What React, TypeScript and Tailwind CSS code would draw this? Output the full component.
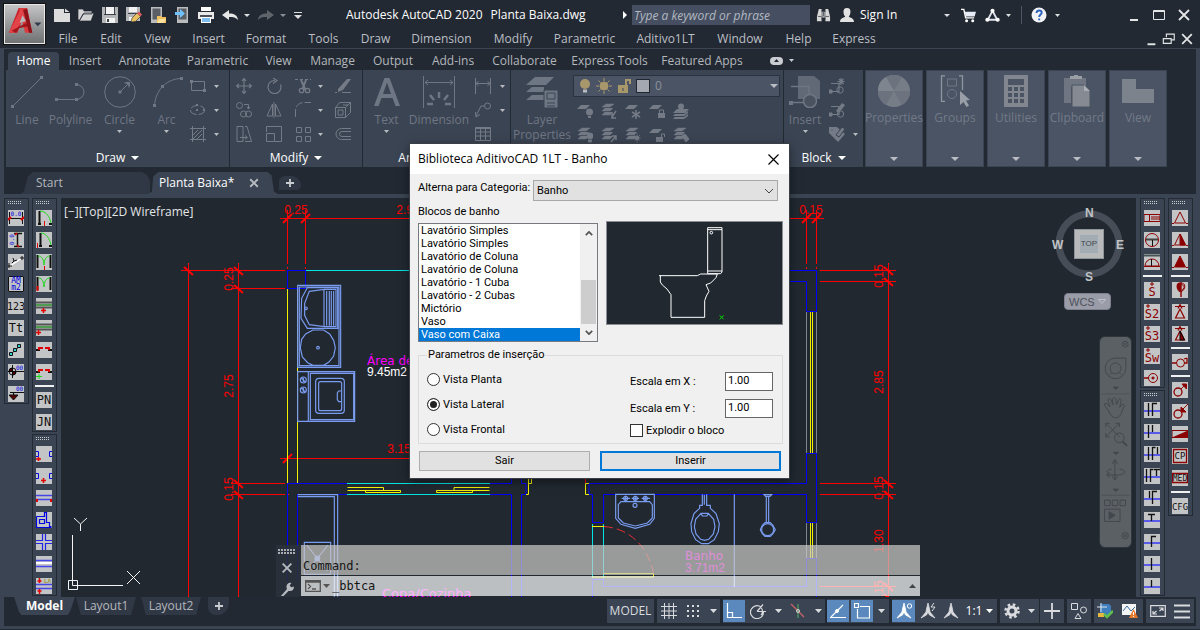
import type { ReactNode } from "react";

/* ---------- shared drawing helpers ---------- */

function Ic({ b = "0 0 16 16", c = "size-4", children }: { b?: string; c?: string; children: ReactNode }) {
  return (
    <svg viewBox={b} className={`${c} shrink-0`} fill="none" stroke="currentColor" aria-hidden="true">
      {children}
    </svg>
  );
}

function Caret({ c = "h-[3px] w-[6px]" }: { c?: string }) {
  return (
    <svg viewBox="0 0 8 4" preserveAspectRatio="none" className={`${c} shrink-0`} aria-hidden="true">
      <path d="M0 0h8l-4 4z" fill="currentColor" />
    </svg>
  );
}

/* ---------- title bar ---------- */

const quickTools: { name: string; art: ReactNode }[] = [
  { name: "New", art: <path d="M0 2h10v4h6v9H0zM11 1.500l4.500 3.500H11z" fill="#dcdcdc" stroke="none" /> },
  { name: "Open", art: <path d="M0 2h5l1 2h8v3H5l-3 6H0zM6 6h10l-3 8H1z" fill="#d4d4d4" stroke="#222933" strokeWidth=".7" /> },
  {
    name: "Save",
    art: (
      <g stroke="none">
        <path d="M0 0h16v16H0z" fill="#b4b6b8" />
        <path d="M3 0h10v7H3zM4 11h9v5H4z" fill="#f2f2f2" />
        <path d="M2 7h12v1H2zM5 12h2v3H5zM3 0h1v7H3zM12 0h1v7h-1z" fill="#3c4148" />
      </g>
    ),
  },
  {
    name: "Save As",
    art: (
      <g stroke="none">
        <path d="M0 0h14v14H0z" fill="#b4b6b8" />
        <path d="M3 0h8v5H3zM3 10h6v4H3z" fill="#f2f2f2" />
        <path d="M2 6h10v1H2z" fill="#3c4148" />
        <path d="m5 15 1-4 5-5 3.500 3.500-5 5z" fill="#e9c060" stroke="#222933" strokeWidth=".6" />
        <path d="m11 6 2-1.500 3 3-1.500 2z" fill="#e05a5a" />
      </g>
    ),
  },
  {
    name: "Open from Web",
    art: (
      <g stroke="none">
        <path d="M1 0h11v16H1z" fill="#b9bbbd" />
        <path d="M2.500 1.500h8v11h-8z" fill="#5b5f65" />
        <path d="M7 9h4l1 1h4v6H7z" fill="#f0c060" />
        <path d="M9 12h7l-2 4H7z" fill="#ffe09a" />
      </g>
    ),
  },
  {
    name: "Save to Web",
    art: (
      <g stroke="none">
        <path d="M3 0h11v16H3z" fill="#b9bbbd" />
        <path d="M4.500 1.500h8v11h-8z" fill="#5b5f65" />
        <path d="M1 5h5V2l5 4.500L6 11V8H1z" fill="#6fc1ff" />
      </g>
    ),
  },
  {
    name: "Plot",
    art: (
      <g stroke="none">
        <path d="M3 0h10v4H3z" fill="#fff" />
        <path d="M0 5h16v7H0z" fill="#e8e8e8" />
        <path d="M2 8h12v2H2z" fill="#4b5058" />
        <path d="M3 10h10v6H3z" fill="#fff" />
        <path d="M4 11h8v4H4z" fill="#7dbdf0" />
      </g>
    ),
  },
  { name: "Undo", art: <path d="M0 8 7 3v3.500c5 0 8.500 1.500 9 6.500-2-2.500-4.500-3-9-3V13z" fill="#e6e6e6" stroke="none" /> },
];

const menus: [string, string][] = [
  ["File", "w-[42px]"],
  ["Edit", "w-[44px]"],
  ["View", "w-[49px]"],
  ["Insert", "w-[53px]"],
  ["Format", "w-[62px]"],
  ["Tools", "w-[53px]"],
  ["Draw", "w-[51px]"],
  ["Dimension", "w-[81px]"],
  ["Modify", "w-[62px]"],
  ["Parametric", "w-[81px]"],
  ["Aditivo1LT", "w-[81px]"],
  ["Window", "w-[68px]"],
  ["Help", "w-[49px]"],
  ["Express", "w-[62px]"],
];

function TitleBar() {
  return (
    <header className="flex h-12 shrink-0 bg-[#222933] pl-1">
      <button
        type="button"
        aria-label="Application menu"
        className="mt-1 flex h-[40px] w-[41px] shrink-0 items-start border border-[#e8e8e8] bg-linear-to-b from-[#c4c4c6] to-[#707274] shadow-[0_0_0_1px_#111]"
      >
        <svg viewBox="0 0 120 114" className="h-[38px] w-[39px]" aria-hidden="true">
          <path d="M12 84 42 8h26L38 84z" fill="#c4242b" />
          <path d="M42 8h26L84 84H62z" fill="#d93a3c" />
          <path d="m50 8 12 26-34 50H12z" fill="#e3444a" />
          <path d="m20 78 44-24 8 10-30 6-8 14z" fill="#a3161d" />
          <path d="m54 30-9 24 20-6z" fill="#b9babc" />
          <path d="m68 10 16 74H74L56 14z" fill="#8e1219" />
          <path d="M90 52h22l-11 12z" fill="#333c4a" />
        </svg>
      </button>
      <div className="flex min-w-0 flex-1 flex-col">
        <div className="flex h-[30px] items-center pr-1 pl-[5px] text-[#dcdee0]">
          {quickTools.map((t) => (
            <button key={t.name} type="button" aria-label={t.name} className="flex w-6 shrink-0 justify-center">
              <Ic>{t.art}</Ic>
            </button>
          ))}
          <button type="button" aria-label="Undo list" className="flex w-[10px] shrink-0 justify-center">
            <Caret />
          </button>
          <button type="button" aria-label="Redo" className="ml-[2px] flex w-6 shrink-0 justify-center">
            <Ic>
              <path d="M16 8 9 3v3.500c-5 0-8.500 1.500-9 6.500 2-2.500 4.500-3 9-3V13z" fill="#5f646b" stroke="none" />
            </Ic>
          </button>
          <button type="button" aria-label="Redo list" className="flex w-[10px] shrink-0 justify-center text-[#8b9097]">
            <Caret />
          </button>
          <button type="button" aria-label="Customize" className="flex w-5 shrink-0 flex-col items-center gap-[2px]">
            <span className="h-px w-2 bg-current" />
            <Caret c="h-[4px] w-[8px]" />
          </button>
          <h1 className="ml-[38px] flex w-[271px] shrink-0 gap-2 whitespace-nowrap text-white">
            <span>Autodesk AutoCAD 2020</span>
            <span>Planta Baixa.dwg</span>
          </h1>
          <button type="button" aria-label="Collapse search" className="flex w-[15px] shrink-0 justify-center">
            <Ic b="0 0 4 8" c="h-2 w-1">
              <path d="m0 0 4 4-4 4z" fill="#fff" stroke="none" />
            </Ic>
          </button>
          <input
            aria-label="Search"
            placeholder="Type a keyword or phrase"
            className="h-5 w-[178px] shrink-0 bg-[#454f61] px-[2px] italic placeholder:text-[#b3b8c0]"
          />
          <button type="button" aria-label="Find" className="flex w-[26px] shrink-0 justify-center">
            <Ic c="size-[15px]">
              <path d="M3 1h3v3h4V1h3l2 8v5h-5v-4H6v4H1V9z" fill="#d8d8d8" stroke="none" />
              <path d="M6.500 2v11M9.500 2v11M8 4v5M2 9h4M10 9h4" stroke="#3a3f47" strokeWidth=".8" />
            </Ic>
          </button>
          <button type="button" className="flex w-[118px] shrink-0 items-center pl-1">
            <Ic c="size-[14px]">
              <path d="M8 0c6 0 4 8 2 10 1 1 6 1 6 6H0c0-5 5-5 6-6C4 8 2 0 8 0z" fill="#e2e2e2" stroke="none" />
            </Ic>
            <span className="ml-[6px] flex-1 text-left text-white">Sign In</span>
            <span className="mr-1">
              <Caret />
            </span>
          </button>
          <button type="button" aria-label="App Store" className="flex w-7 shrink-0 justify-center">
            <Ic c="size-[15px]">
              <path d="M0 1.500h3l2 9h9" stroke="#fff" strokeWidth="1.500" />
              <path d="M4 4h12l-1.500 5H5z" fill="#e8ecf6" stroke="none" />
              <circle cx="6" cy="13.500" r="1.600" fill="#fff" stroke="none" />
              <circle cx="12.500" cy="13.500" r="1.600" fill="#fff" stroke="none" />
            </Ic>
          </button>
          <button type="button" aria-label="Connected services" className="flex shrink-0 items-center gap-[6px] pl-[3px]">
            <Ic c="size-[15px]">
              <path d="M8 3 3 12.500h10z" stroke="#dfe3ee" strokeWidth="2" />
              <circle cx="8" cy="3" r="2.200" fill="#fff" stroke="none" />
              <circle cx="2.500" cy="12.500" r="2.200" fill="#fff" stroke="none" />
              <circle cx="13.500" cy="12.500" r="2.200" fill="#fff" stroke="none" />
            </Ic>
            <Caret c="h-[3px] w-[5px]" />
          </button>
          <span className="ml-[10px] h-[18px] w-px shrink-0 bg-[#4b5566]" />
          <button type="button" aria-label="Help" className="ml-[9px] flex shrink-0 items-center gap-2">
            <Ic>
              <circle cx="8" cy="8" r="7.500" fill="#f1f3f6" stroke="none" />
              <path d="M5.500 6c0-3.500 5.200-3.200 5.200-.3C10.700 7.500 8.200 7.600 8.200 10M8.200 11.500v1.800" stroke="#2d62c0" strokeWidth="1.900" />
            </Ic>
            <Caret c="h-[3px] w-[5px]" />
          </button>
          <div className="ml-auto flex text-[#e4e5e6]">
            <button type="button" aria-label="Minimize" className="flex w-[25px] justify-center">
              <Ic>
                <path d="M4 13h8" strokeWidth="2" />
              </Ic>
            </button>
            <button type="button" aria-label="Maximize" className="flex w-[25px] justify-center">
              <Ic>
                <path d="M2.500 3.500h11v9h-11zM2 4.500h12" />
              </Ic>
            </button>
            <button type="button" aria-label="Close" className="flex w-[25px] justify-center">
              <Ic>
                <path d="m3 3 10 10M13 3 3 13" strokeWidth="1.800" />
              </Ic>
            </button>
          </div>
        </div>
        <nav aria-label="Menu bar" className="flex h-[18px] items-center pr-1 pl-[2px] text-[#bcbfc4]">
          {menus.map(([m, w]) => (
            <a key={m} href="#menu" className={`${w} shrink-0 text-center whitespace-nowrap`}>
              {m}
            </a>
          ))}
          <div className="ml-auto flex text-[#e4e5e6]">
            <button type="button" aria-label="Minimize drawing" className="flex w-[18px] justify-center">
              <Ic c="size-[14px]">
                <path d="M4 14h9" strokeWidth="2.200" />
              </Ic>
            </button>
            <button type="button" aria-label="Restore drawing" className="flex w-[18px] justify-center">
              <Ic c="size-[14px]">
                <path d="M5 6V2.500h9V9h-3M1.500 7.500h9V13h-9z" strokeWidth="1.300" />
              </Ic>
            </button>
            <button type="button" aria-label="Close drawing" className="flex w-[18px] justify-center">
              <Ic c="size-[14px]">
                <path d="m2.500 2.500 11 11M13.500 2.500l-11 11" strokeWidth="2" />
              </Ic>
            </button>
          </div>
        </nav>
      </div>
    </header>
  );
}

/* ---------- ribbon ---------- */

const ribbonTabs: [string, string][] = [
  ["Insert", "w-[50px]"],
  ["Annotate", "w-[69px]"],
  ["Parametric", "w-[77px]"],
  ["View", "w-[45px]"],
  ["Manage", "w-[63px]"],
  ["Output", "w-[58px]"],
  ["Add-ins", "w-[62px]"],
  ["Collaborate", "w-[81px]"],
  ["Express Tools", "w-[89px]"],
  ["Featured Apps", "w-[96px]"],
];

function BigTool({ w, label, caret, children }: { w: string; label: string; caret?: boolean; children: ReactNode }) {
  return (
    <button type="button" className={`${w} flex shrink-0 flex-col items-center pt-[6px] text-[#6f7683]`}>
      <Ic b="0 0 32 32" c="size-8">
        {children}
      </Ic>
      <span className="mt-[4px] text-center leading-[15px] whitespace-pre">{label}</span>
      {caret && (
        <span className="mt-[3px] text-[#b9bcc1]">
          <Caret c="h-[3px] w-[5px]" />
        </span>
      )}
    </button>
  );
}

function Small({ label, children }: { label: string; children: ReactNode }) {
  return (
    <button type="button" aria-label={label} className="flex h-6 items-center justify-center text-[#747b86]">
      <Ic>{children}</Ic>
    </button>
  );
}

function SmallCaret({ label }: { label: string }) {
  return (
    <button type="button" aria-label={label} className="flex h-6 items-center justify-center text-[#b9bcc1]">
      <Caret c="h-[3px] w-[5px]" />
    </button>
  );
}

function Panel({ w, title, children }: { w: string; title: string; children: ReactNode }) {
  return (
    <section className={`${w} mr-px flex shrink-0 flex-col bg-[#3b4453]`}>
      <div className="flex h-[78px]">{children}</div>
      <button type="button" className="flex h-[19px] items-center justify-center gap-[6px] text-white">
        {title}
        <Caret c="h-[4px] w-[8px]" />
      </button>
    </section>
  );
}

const sheet = "M4 2h9l-4 4H0z";

function LayerStack() {
  return <path d="M5 1h8L9 4H1zM4 5l-3 3h8l3-3M4 9l-3 3h8l3-3" fill="currentColor" strokeWidth=".5" />;
}

const layerTools: { name: string; art: ReactNode }[] = [
  { name: "Off", art: <g fill="currentColor" stroke="none"><path d={sheet} /><circle cx="12.500" cy="9" r="3.500" /><path d="M11 13h3v2h-3z" /></g> },
  { name: "Isolate", art: <g><LayerStack /><path d="m15 8-4 6M11 10v5h4" strokeWidth="1.500" /></g> },
  { name: "Freeze", art: <g><path d={sheet} fill="currentColor" stroke="none" /><path d="M11 7v9M7 9l8 5M7 14l8-5" strokeWidth="1.500" /></g> },
  { name: "Lock", art: <g><path d={sheet} fill="currentColor" stroke="none" /><path d="M9 10h7v5H9z" fill="currentColor" stroke="none" /><path d="M10.500 10V7h4v3" /></g> },
  { name: "Make Current", art: <g fill="currentColor" stroke="none"><circle cx="8" cy="3.500" r="3" /><path d="M4 6h12l-4 4H0zM2 11h9l4-3v2l-4 3H0zM2 14h9l4-3v2l-4 3H0z" /></g> },
  { name: "Turn All On", art: <g><LayerStack /><circle cx="13" cy="9" r="3" fill="currentColor" /><path d="M11.500 13h3v2h-3z" fill="currentColor" /></g> },
  { name: "Unisolate", art: <g><LayerStack /><path d="m10 15 5-6M11 9h4v4" strokeWidth="1.500" /></g> },
  { name: "Thaw All", art: <g><LayerStack /><circle cx="12" cy="11" r="2" fill="currentColor" /><path d="M12 6.500v9M7.500 11h9M9 8l6 6M15 8l-6 6" strokeDasharray="1 1" /></g> },
  { name: "Unlock", art: <g><path d={sheet} fill="currentColor" stroke="none" /><path d="M7 10h7v5H7z" fill="currentColor" stroke="none" /><path d="M12.500 10V7h3v3" /></g> },
  { name: "Match Layer", art: <g><LayerStack /><path d="m9 9 3-2 4 5-3 3z" fill="currentColor" /></g> },
];

const foldedPanels: { name: string; art: ReactNode }[] = [
  {
    name: "Properties",
    art: (
      <g stroke="none">
        <circle cx="16" cy="16" r="16" fill="#767d87" />
        <path d="M16 16 8 2a16 16 0 0 1 16 0zM16 16h16a16 16 0 0 1-8 14zM16 16 8 30A16 16 0 0 1 0 16z" fill="#6c737e" />
        <path d="M16 16 8 2a16 16 0 0 0-8 14z" fill="#7f858e" />
      </g>
    ),
  },
  {
    name: "Groups",
    art: (
      <g stroke="#90969f">
        <path d="M6 .800H2.500v25.500H6M20 .800h3.500V15" strokeWidth="1.300" />
        <path d="M8.500 4h9v7h-9z" stroke="#6f7783" />
        <circle cx="13" cy="19" r="4.500" stroke="#6f7783" />
        <path d="M21 16v14l3.500-3 3 5 2.500-1.500-3-5 4-.500z" fill="#9a9fa7" stroke="none" />
      </g>
    ),
  },
  {
    name: "Utilities",
    art: (
      <g stroke="none">
        <path d="M4 0h24v32H4z" fill="#81868f" />
        <path d="M8 4h16v6H8zM8 12h4v4H8zm6 0h4v4h-4zm6 0h4v4h-4zM8 18h4v4H8zm6 0h4v4h-4zm6 0h4v4h-4zM8 24h4v4H8zm6 0h4v4h-4zm6 0h4v4h-4z" fill="#4a5463" />
      </g>
    ),
  },
  {
    name: "Clipboard",
    art: (
      <g stroke="none">
        <path d="M3 3h22v9H3zM3 3h7v25H3z" fill="#6f7681" />
        <path d="M9 1h4V0h4v1h4v3H9z" fill="#9a9fa6" />
        <path d="M11 10h12l6 6v16H11z" fill="#858a93" stroke="#4a5463" />
        <path d="M23 10v6h6z" fill="#a9adb4" />
      </g>
    ),
  },
  { name: "View", art: <path d="M0 4h14v10h18v14H0z" fill="#7d838d" stroke="none" /> },
];

function Ribbon() {
  return (
    <div className="bg-[#222933]">
      <nav aria-label="Ribbon tabs" className="flex h-[21px] items-end pl-1 text-[#b4b7bc]">
        <a href="#home" className="flex h-[18px] w-[51px] shrink-0 items-center justify-center rounded-t-sm bg-[#3b4453] pb-px text-white">
          Home
        </a>
        <div className="flex h-[18px] items-center pb-px pl-px">
          {ribbonTabs.map(([t, w]) => (
            <a key={t} href="#tab" className={`${w} shrink-0 text-center whitespace-nowrap`}>
              {t}
            </a>
          ))}
          <button type="button" aria-label="Minimize ribbon" className="ml-[20px] flex items-center gap-[6px] text-[#c9ccd0]">
            <span className="flex h-2 w-[13px] items-center justify-center rounded-sm bg-current">
              <span className="rotate-180 text-[#222933]">
                <Caret c="h-[3px] w-[5px]" />
              </span>
            </span>
            <Caret c="h-[3px] w-[5px]" />
          </button>
        </div>
      </nav>
      <div className="flex pl-[2px]">
        <Panel w="w-[223px]" title="Draw">
          <BigTool w="w-[42px]" label="Line">
            <path d="m2 30 28-28" />
            <path d="M0 29h3v3H0zM29 0h3v3h-3z" fill="currentColor" stroke="none" />
          </BigTool>
          <BigTool w="w-[45px]" label="Polyline">
            <path d="M1 23.500h21M21 8.500a8 7.500 0 0 1 0 15" />
            <path d="M0 22h3v3H0zM20 22h3v3h-3zM20 7h3v3h-3z" fill="currentColor" stroke="none" />
          </BigTool>
          <BigTool w="w-[53px]" label="Circle" caret>
            <circle cx="16" cy="16" r="15.300" />
            <path d="m16 16 8-8M20.500 7H25v4.500" />
            <path d="M14.500 14.500h3v3h-3zM21 6h5v5z" fill="currentColor" stroke="none" />
          </BigTool>
          <BigTool w="w-[41px]" label="Arc" caret>
            <path d="M3.500 30C4 16 14 3 30 2.500" />
            <path d="M2 28h3v3H2zM10 9h3v3h-3zM29 1h3v3h-3z" fill="currentColor" stroke="none" />
          </BigTool>
          <div className="mt-1 grid h-[72px] grid-cols-[22px_14px] content-start">
            <Small label="Rectangle">
              <path d="M1.500 3.500h13v9h-13z" />
              <path d="M0 2h3v3H0zM13 11h3v3h-3z" fill="currentColor" stroke="none" />
            </Small>
            <SmallCaret label="Rectangle options" />
            <Small label="Ellipse">
              <ellipse cx="7.500" cy="8" rx="7" ry="4.500" strokeDasharray="8 2" />
              <path d="M6 7h2v2H6zM13 7h2v2h-2zM6 2h2v2H6z" fill="currentColor" stroke="none" />
            </Small>
            <SmallCaret label="Ellipse options" />
            <Small label="Hatch">
              <path d="M2.500 0v16M13.500 0v16M0 2.500h16M0 13.500h16M3 9l5-5M3 13l9-9M7 13l5-5" />
            </Small>
            <SmallCaret label="Hatch options" />
          </div>
        </Panel>
        <Panel w="w-[132px]" title="Modify">
          <div className="mt-1 grid h-[72px] grid-cols-[28px_32px_26px_8px_38px] content-start">
            <Small label="Move">
              <path d="M8 1v14M1 8h14M6 3l2-2.500L10 3M6 13l2 2.500 2-2.500M3 6 .500 8 3 10M13 6l2.500 2-2.500 2" strokeWidth="1.200" />
            </Small>
            <Small label="Rotate">
              <path d="M9 2.500a6.500 6.500 0 1 0 5.500 4M7 0l4 2.500L7 5.500" strokeWidth="1.200" />
            </Small>
            <Small label="Trim">
              <path d="M0 1.500h16" strokeDasharray="3 2" />
              <path d="m6 2 4.500 10M11 2 7.500 11" strokeWidth="2" />
              <circle cx="6.500" cy="12.500" r="2.200" strokeWidth="1.300" />
              <circle cx="12.500" cy="12.500" r="2.200" strokeWidth="1.300" />
            </Small>
            <SmallCaret label="Trim options" />
            <Small label="Erase">
              <path d="M0 14.500h2M7 14.500h9" />
              <path d="m3 11 9-10h4L8 12l-5 2z" fill="currentColor" stroke="none" />
            </Small>
            <Small label="Copy">
              <circle cx="3.500" cy="3.500" r="3" />
              <circle cx="7.500" cy="12" r="3" />
              <circle cx="12.500" cy="12" r="3" />
              <path d="M8 2.500h4.500V7M11 5l1.500 2L14 5" />
            </Small>
            <Small label="Mirror">
              <path d="M6.500 2v12H1zM9.500 2v12H15zM8 0v16" />
            </Small>
            <Small label="Fillet">
              <path d="M.500 15V9C.500 4 4 .500 9 .500h7" strokeDasharray="8 2" />
            </Small>
            <SmallCaret label="Fillet options" />
            <Small label="Explode">
              <path d="M.500 5.500h10v10H.500zM3 8h5v5H3zM.500 5.500l4-5h11l-5 5M15.500.500v10l-5 5M8 3h5" />
            </Small>
            <Small label="Stretch">
              <path d="M1 .500h6v15H1zM9 .500h2l4.500 15H9M4 11.500h7M9 9.500l2.500 2L9 13.500" />
            </Small>
            <Small label="Scale">
              <path d="M.500 6V.500h15v15H9M.500 7.500h8v8h-8z" />
            </Small>
            <Small label="Array">
              <path d="M1.500 1.500h5v5h-5zM10.500 1.500h5v5h-5zM1.500 10.500h5v5h-5zM10.500 10.500h5v5h-5z" />
            </Small>
            <SmallCaret label="Array options" />
            <Small label="Offset">
              <path d="M16 2.500H6.500a5.500 5.500 0 0 0 0 11H16M16 5.500H7a2.500 2.500 0 0 0 0 5h9" />
            </Small>
          </div>
        </Panel>
        <Panel w="w-[147px]" title="Annotation">
          <BigTool w="w-[47px]" label="Text" caret>
            <path d="M3 30 13.500 2h5L29 30h-4.500l-3-8h-11l-3 8zM12 18h8L16 6.500z" fill="currentColor" stroke="none" />
          </BigTool>
          <BigTool w="w-[58px]" label="Dimension">
            <path d="M.500 0v32M31.500 0v32M2 6.500h28M5 4 2 6.500 5 9M27 4l3 2.500L27 9" />
            <path d="M16 16v6M7 19l4 5M25 19l-4 5M4 28h6M22 28h6" strokeWidth="2.500" />
          </BigTool>
          <div className="mt-1 grid h-[72px] grid-cols-[30px_8px] content-start">
            <Small label="Linear">
              <path d="M.500 0v16M15.500 0v16M1 5.500h14M3.500 3 1 5.500 3.500 8M12.500 3 15 5.500 12.500 8" />
            </Small>
            <SmallCaret label="Linear options" />
            <Small label="Leader">
              <circle cx="12.500" cy="4" r="3" />
              <path d="M9.500 4H6L1 14M.500 10l.500 5 4-2.500" />
            </Small>
            <SmallCaret label="Leader options" />
            <Small label="Table">
              <path d="M.500 1.500h15v13H.500zM0 2.500h16M.500 6h15M.500 10h15M5.500 2v12M10.500 2v12" />
            </Small>
          </div>
        </Panel>
        <Panel w="w-[272px]" title="Layers">
          <BigTool w="w-[62px]" label={"Layer\nProperties"}>
            <path d="M9 1h19l-8 8H0zM6 11l-6 5h18v-5M6 19l-6 5h18v-5" fill="currentColor" stroke="none" />
            <path d="M18 14h14v18H18z" fill="currentColor" stroke="#3b4453" />
            <path d="M21 17h8v6h-8zM21 27h8M21 30h8" stroke="#3b4453" />
          </BigTool>
          <div className="flex flex-1 flex-col pt-[5px] pr-[3px]">
            <button
              type="button"
              aria-label="Layer 0"
              className="flex h-[22px] items-center border border-[#2c333f] bg-[#4a5465] pr-px pl-[2px] text-[#8d929b]"
            >
              <span className="flex w-[18px] justify-center">
                <Ic>
                  <circle cx="8" cy="6" r="5" fill="#a9976c" stroke="none" />
                  <path d="M6 11.500h4v3H6z" fill="#b9bcc1" stroke="none" />
                </Ic>
              </span>
              <span className="flex w-[20px] justify-center text-[#a9976c]">
                <Ic>
                  <circle cx="8" cy="8" r="4" fill="currentColor" />
                  <path d="M8 0v3M8 13v3M0 8h3M13 8h3M2.500 2.500l2 2M11.500 11.500l2 2M13.500 2.500l-2 2M4.500 11.500l-2 2" />
                </Ic>
              </span>
              <span className="flex w-[20px] justify-center text-[#a9976c]">
                <Ic>
                  <path d="M2 7h10v8H2z" fill="currentColor" stroke="none" />
                  <path d="M10 7V2h4v4" strokeWidth="2" />
                  <path d="M7 10v3" stroke="#3b4453" />
                </Ic>
              </span>
              <span className="ml-[2px] size-[14px] border border-[#22272f] bg-[#a3a8b1]" />
              <span className="ml-[5px] flex-1 text-left">0</span>
              <span className="text-[#b9bcc1]">
                <Caret c="h-[4px] w-[8px]" />
              </span>
            </button>
            <div className="mt-[2px] grid grid-cols-[repeat(5,24px)]">
              {layerTools.map((t) => (
                <Small key={t.name} label={t.name}>
                  {t.art}
                </Small>
              ))}
            </div>
          </div>
        </Panel>
        <Panel w="w-[79px]" title="Block">
          <BigTool w="w-[42px]" label="Insert" caret>
            <path d="M9 0h16l6 5v18H9z" fill="currentColor" stroke="none" opacity=".75" />
            <path d="M2 10.500h18v16H2" strokeWidth="1.500" />
            <circle cx="21" cy="25" r="6.500" fill="#4a5260" strokeWidth="1.500" />
            <path d="M0 25h4v4H0z" fill="currentColor" stroke="none" />
          </BigTool>
          <div className="mt-1 grid h-[72px] grid-cols-[22px_14px] content-start">
            <Small label="Create block">
              <path d="M2 5.500h8v8H2M12 0v7M8.500 3.500h7M10 1l4.500 5M14.500 1 10 6" strokeWidth="1.200" />
              <circle cx="11" cy="12" r="3.200" />
              <path d="M0 12h3v3H0z" fill="currentColor" />
            </Small>
            <span />
            <Small label="Edit block">
              <path d="M2 4.500h8v8H2" strokeWidth="1.200" />
              <circle cx="11.500" cy="12" r="3.200" />
              <path d="m7 9 6-8 3 2-6 8z" fill="currentColor" stroke="none" />
              <path d="M0 11h3v3H0z" fill="currentColor" />
            </Small>
            <span />
            <Small label="Edit attributes">
              <path d="M0 1h8l8 7-7 8-9-9z" fill="currentColor" stroke="none" />
              <path d="m7 9 6-8 3 2-6 8z" fill="currentColor" stroke="#3b4453" />
              <circle cx="3" cy="4" r="1" fill="#3b4453" />
            </Small>
            <SmallCaret label="Attribute options" />
          </div>
        </Panel>
        <div className="ml-px flex gap-[3px]">
          {foldedPanels.map((p) => (
            <button
              key={p.name}
              type="button"
              className="flex h-[97px] w-[58px] shrink-0 flex-col items-center border border-[#3b4453] bg-[#4a5465] pt-1 text-[#727a87]"
            >
              <Ic b="0 0 32 32" c="size-8">
                {p.art}
              </Ic>
              <span className="mt-[3px] leading-[15px]">{p.name}</span>
              <span className="mt-auto mb-[5px] text-[#b9bcc1]">
                <Caret c="h-[4px] w-[8px]" />
              </span>
            </button>
          ))}
        </div>
      </div>
      <div className="flex h-[27px] items-end pl-4">
        <a
          href="#start"
          className="flex h-[22px] w-[130px] items-center bg-[#303846] pl-4 text-[#b4b7bc] [clip-path:polygon(0_100%,3%_90%,6%_20%,10%_0,94%_0,98%_15%,100%_40%,100%_100%)]"
        >
          Start
        </a>
        <a
          href="#planta"
          className="-ml-[2px] flex h-[22px] w-[130px] items-center bg-[#3b4453] pl-[11px] text-white [clip-path:polygon(0_100%,3%_90%,4%_20%,8%_0,92%_0,95%_15%,97%_90%,100%_100%)]"
        >
          Planta Baixa*
          <span className="ml-[15px] text-[#b9bcc1]">
            <Ic c="size-[10px]">
              <path d="m2 2 12 12M14 2 2 14" strokeWidth="3" />
            </Ic>
          </span>
        </a>
        <button
          type="button"
          aria-label="New drawing"
          className="mb-1 ml-px flex h-[14px] w-[22px] items-center justify-center rounded-tl-lg rounded-tr-xl rounded-br-md bg-[#303846] text-[#c9ccd0]"
        >
          <Ic c="size-[8px]" b="0 0 8 8">
            <path d="M4 0v8M0 4h8" strokeWidth="1.800" />
          </Ic>
        </button>
      </div>
    </div>
  );
}

/* ---------- side toolbars ---------- */

const B = "#0000e0";
const R = "#e00000";
const M = "#8b0000";

function T({ children, s = 9, y = 12, f = "#111" }: { children: string; s?: number; y?: number; f?: string }) {
  return (
    <text x="8" y={y} textAnchor="middle" fontSize={s} fill={f} stroke="none" fontFamily="DejaVu Sans Mono, monospace">
      {children}
    </text>
  );
}

function WallBand({ y = 8 }: { y?: number }) {
  return <path d={`M0 ${y}h16v2H0z`} fill="#5a5ae8" stroke="none" />;
}

const sep = null;
type Tool = { name: string; art: ReactNode } | null;

const dimTools: Tool[] = [
  { name: "Linear dimension", art: <g><path d="M1.500 2v12M14.500 2v12M0 8.500h16" stroke="#111" /><path d="m0 10 3-3M13 10l3-3" stroke={R} strokeWidth="2" /><T s={6} y={6} f={B}>0.0</T></g> },
  { name: "Vertical dimension", art: <g><path d="M6 1.500h8M6 14.500h8M9.500 1v14" stroke="#111" strokeWidth="1.500" /><path d="M7 3 9 1M11 15l-2-2" stroke={R} strokeWidth="1.500" /><text x="0" y="0" transform="translate(6 13) rotate(-90)" fontSize="6" fill={B} stroke="none" fontFamily="DejaVu Sans Mono, monospace">0.0</text></g> },
  { name: "Aligned dimension", art: <g><path d="m2 12 12-8" stroke="#fff" strokeWidth="1.500" /><path d="M1 9v5M0 12h4M14 2v4M12 4h4M5 4l1 3 3-1M4 9l2-2" stroke="#111" /></g> },
  { name: "Area", art: <g><path d="M.500.500h15v15H.500z" stroke="#111" /><T s={8} y={7} f={B}>AM</T><T s={8} y={14} f={B}>m2</T></g> },
  { name: "Numbering", art: <T s={10} y={12}>123</T> },
  { name: "Text", art: <T s={12} y={12}>Tt</T> },
  { name: "Sequence", art: <g stroke="#111"><path d="m3 12 10-9" /><path d="M1.500 10.500h3v3h-3zM5.500 6.500h3v3h-3zM9.500 2.500h3v3h-3z" fill="#2fd6d6" /></g> },
  { name: "Level mark", art: <g><path d="M0 7.500h16M4.500 1v13" stroke="#111" /><circle cx="4.500" cy="7.500" r="3.500" stroke="#111" /><path d="M4.500 4v3.500H1A3.500 3.500 0 0 1 4.500 4zM4.500 11V7.500H8A3.500 3.500 0 0 1 4.500 11z" fill="#500" /><text x="8" y="6" fontSize="6" fill={B} stroke="none" fontFamily="DejaVu Sans Mono, monospace">00</text></g> },
  { name: "Section level", art: <g><path d="M2 6.500h14M5.500 6v4" stroke="#111" strokeWidth="1.200" /><path d="M1 9h9l-4.500 5z" fill="#500" stroke="#111" /><text x="8" y="5" fontSize="6" fill={B} stroke="none" fontFamily="DejaVu Sans Mono, monospace">00</text></g> },
];

const doorTools: Tool[] = [
  { name: "Door centered", art: <g><path d="M3.500 1v13M2 14h3M13 14h3" stroke="#111" strokeWidth="2" /><path d="M4 1c6 0 10 6 11 12" stroke="#19d919" /><path d="M8.500 11v5" stroke={R} /></g> },
  { name: "Door by corner", art: <g><path d="M4.500 1v13M3 14h3M13 14h3" stroke="#111" strokeWidth="2" /><path d="M5 1c5 0 9 6 10 12" stroke="#19d919" /><path d="M1.500 11v5" stroke={R} /></g> },
  { name: "Double door centered", art: <g><path d="M1.500 1v13M14.500 1v13" stroke="#111" strokeWidth="2" /><path d="M2 2c4 0 6 4 6 9 0-5 2-9 6-9" stroke="#19d919" /><path d="M8.500 12v4" stroke={R} /></g> },
  { name: "Double door by corner", art: <g><path d="M1.500 1v13M14.500 1v13" stroke="#111" strokeWidth="2" /><path d="M3 2c3 0 5 4 5 9 0-5 2-9 6-9" stroke="#19d919" /><path d="M1.500 10v5" stroke={R} strokeWidth="2" /></g> },
  { name: "Window centered", art: <g><path d="M0 4.500h16M0 9.500h16" stroke="#555" strokeWidth="2" /><path d="M0 7h16" stroke="#008000" strokeWidth="1.200" /><path d="M7.500 15v-5M5 12.500h5" stroke={R} strokeWidth="1.500" /></g> },
  { name: "Window by corner", art: <g><path d="M0 4.500h16M0 9.500h16" stroke="#555" strokeWidth="2" /><path d="M0 7h16" stroke="#008000" strokeWidth="1.200" /><path d="M2.500 15v-5M0 12.500h5" stroke={R} strokeWidth="1.500" /></g> },
  { name: "Opening centered", art: <g><path d="M0 8h4M12 8h4" stroke="#111" strokeWidth="2" /><path d="M3 8V6h4M13 8V6H9" stroke={R} strokeWidth="2" /></g> },
  { name: "Opening by corner", art: <g><path d="M0 8h4M12 8h4" stroke="#111" strokeWidth="2" /><path d="M3 8V6h4M13 8V6H9" stroke={R} strokeWidth="2" /><path d="M0 12.500h6M3 10v5" stroke="#19d919" /></g> },
  sep,
  { name: "PN", art: <T s={12} y={12}>PN</T> },
  { name: "JN", art: <T s={12} y={12}>JN</T> },
];

const wallEditTools: Tool[] = [
  { name: "Wall opening start", art: <g><path d="M0 5.500h2.500v5H0M16 5.500h-2.500v5H16" stroke={B} /><path d="M2.500 15v-4M0 13h5" stroke={R} strokeWidth="1.500" /></g> },
  { name: "Wall opening center", art: <g><path d="M0 5.500h2.500v5H0M16 5.500h-2.500v5H16" stroke={B} /><path d="M7.500 15v-5M5 12.500h5" stroke={R} strokeWidth="1.500" /></g> },
  { name: "Close wall", art: <g><path d="M0 5.500h16M0 9.500h16" stroke="#4444e8" strokeWidth="1.500" /><path d="M0 10.500h2M14 10.500h2" stroke={R} strokeWidth="3" /></g> },
  { name: "Wall outline", art: <path d="M.500 4.500h8v-4h2v10h3v4h2M.500 4.500v11h15M3.500 7.500h5v4h-5z" stroke={B} strokeWidth="1.200" /> },
  { name: "Wall crossing", art: <path d="M6.500 0v6.500H0M9.500 0v6.500H16M6.500 16V9.500H0M9.500 16V9.500H16" stroke="#2222e4" strokeWidth="1.200" /> },
  { name: "Parallel wall", art: <g><path d="M0 4.500h16M0 10.500h16" stroke="#4444e8" strokeWidth="1.500" /><path d="M0 7h16" stroke="#fff" strokeWidth="2" /></g> },
  { name: "Wall label", art: <g><path d="M0 6.500h16M0 10.500h16" stroke="#4444e8" strokeWidth="1.500" /><path d="M3.500 0v5M1.500 3h4M3.500 16v-5M1.500 13h4" stroke={R} strokeWidth="1.500" /><text x="8" y="5" fontSize="6" fill="#8a8a00" stroke="none" fontFamily="DejaVu Sans Mono, monospace">LA</text></g> },
];

const elecTools: Tool[] = [
  { name: "Fluorescent", art: <path d="M0 4.500h16v7H0zM5.500 4.500v7M7 7h9M7 9h9" stroke={M} /> },
  { name: "Ceiling light", art: <g><circle cx="8" cy="8" r="6.500" stroke={M} /><path d="M2 7.500h12" stroke="#444" strokeWidth="2" /><path d="M8.500 8v6" stroke="#111" /></g> },
  { name: "Wall light", art: <g><path d="M0 1.500h16" stroke="#455" strokeWidth="2" /><path d="M1 12a7 7 0 0 1 14 0zM0 12.500h16" stroke={M} /><path d="M7.500 5v7" stroke="#111" /></g> },
  sep,
  { name: "Switch", art: <g><T s={12} y={14} f={M}>S</T><path d="M8 0v4M6 2h4" stroke={M} /></g> },
  { name: "Double switch", art: <g><T s={12} y={14} f={M}>S2</T><path d="M4 0v4M2 2h4" stroke={M} /></g> },
  { name: "Triple switch", art: <g><T s={12} y={14} f={M}>S3</T><path d="M4 0v4M2 2h4" stroke={M} /></g> },
  { name: "Three-way switch", art: <g><T s={12} y={14} f={M}>Sw</T><path d="M4 0v4M2 2h4" stroke={M} /></g> },
  { name: "Push button", art: <g><circle cx="9" cy="8" r="4.500" stroke={M} /><path d="M0 8h5M7.500 8h3M9 6.500v3" stroke={M} strokeWidth="1.300" /></g> },
];

const wallMarks: [string, string][] = [
  ["T junction A", "M4.500 1v13M8.500 14V1.500H13"],
  ["T junction B", "M4.500 1v13M8.500 1v7"],
  ["T junction C", "M4.500 1v13M8.500 14V1.500h3M13.500 1v7"],
  ["T junction D", "M2.500 1v13M6.500 14V1.500h3M10 1.500h6M12.500 1v7"],
  ["T junction E", "M5.500 1v7M8.500 14V1.500H13"],
  ["T junction F", "M4 2.500h7M7.500 2v7"],
  ["T junction G", "M7.500 13V2.500H12"],
  ["T junction H", "M7.500 2v12"],
  ["T junction I", "M7.500 2v7"],
];

const wallTools: Tool[] = wallMarks.map(([name, d]) => ({
  name,
  art: (
    <g>
      <WallBand />
      <path d={d} stroke="#111" strokeWidth="1.300" />
    </g>
  ),
}));

const outletTools: Tool[] = [
  { name: "Low outlet", art: <path d="m8 2 5.500 11h-11zM0 13.500h2M14 13.500h2" stroke={M} /> },
  { name: "Medium outlet", art: <g><path d="m8 2 5.500 11h-11z" stroke={M} /><path d="m8 2 5.500 11H8z" fill={M} stroke={M} /><path d="M0 13.500h2M14 13.500h2" stroke={M} /></g> },
  { name: "High outlet", art: <path d="m8 2 5.500 11h-11zM0 13.500h2M14 13.500h2" fill={M} stroke={M} /> },
  sep,
  { name: "Floor outlet", art: <g><path d="M9 1.500 12.500 5 9 10 5.500 5z" stroke={M} /><path d="M9 1C4 1 4 7 9 10zM9 9v6" fill={M} stroke={M} strokeWidth="1.400" /><path d="M9 1c5 0 5 6 0 9" stroke={M} /></g> },
  { name: "Phone outlet", art: <path d="m8 5 4.500 9h-9zM3 2.500h10M6 4.500l2-4 2 4" stroke={M} strokeWidth="1.200" /> },
  { name: "Data outlet", art: <g><path d="m8 5 4.500 9h-9zM3 2.500h10M6 4.500l2-4 2 4" stroke={M} strokeWidth="1.200" /><path d="m8 5 4.500 9H8z" fill={M} /></g> },
  sep,
  { name: "Conduit", art: <g><circle cx="8.500" cy="9" r="4" stroke={M} /><path d="M0 9h4.500M12.500 9H15V4M12 5l3-1" stroke={M} strokeWidth="1.300" /></g> },
  sep,
  { name: "Conduit up", art: <g><circle cx="6" cy="10" r="4" stroke={M} strokeWidth="1.300" /><path d="m9 7 5-5M10 2h4.500v5z" fill={M} stroke={M} /></g> },
  { name: "Conduit down", art: <g><circle cx="6" cy="10" r="4" stroke={M} strokeWidth="1.300" /><path d="m16 0-5 5M9 3v5h5z" fill={M} stroke={M} /></g> },
  { name: "Panel board", art: <g><path d="M0 4.500h16v7H0z" stroke={M} /><path d="M16 4.500v7H0z" fill={M} stroke="none" /></g> },
  { name: "CP", art: <g><path d="M1.500 1.500h13v13h-13z" stroke={M} strokeWidth="1.300" /><T s={9} y={11}>CP</T></g> },
  { name: "MED", art: <g><path d="M.500 3.500h15v9H.500z" stroke={M} strokeWidth="1.300" /><T s={8} y={11}>MED</T></g> },
  sep,
  { name: "CFG", art: <T s={9} y={12}>CFG</T> },
];

function Toolbar({ name, tools }: { name: string; tools: Tool[] }) {
  return (
    <div role="toolbar" aria-label={name} className="flex w-[25px] flex-col items-start gap-[6px] border border-[#232a34] pt-[2px] pb-px pl-[3px]">
      <Ic b="0 0 14 3" c="h-[3px] w-[14px]">
        <path d="M0 .500h14M0 2.500h14" stroke="#c8cbd0" strokeDasharray="1 1" />
      </Ic>
      {tools.map((t, i) =>
        t === null ? (
          <span key={i} className="-my-px -ml-px h-[2px] w-[19px] bg-[#eef0f2]" />
        ) : (
          <button key={i} type="button" aria-label={t.name} className="size-4 overflow-hidden bg-[#c3c4c5]">
            <Ic>{t.art}</Ic>
          </button>
        ),
      )}
    </div>
  );
}

/* ---------- floor plan ---------- */

function Dim({ x, y, v, children }: { x: number; y: number; v?: boolean; children: string }) {
  return (
    <text
      transform={v ? `translate(${x} ${y}) rotate(-90)` : `translate(${x} ${y})`}
      textAnchor="middle"
      fontSize="12"
      fill="#ff0000"
      stroke="none"
    >
      {children}
    </text>
  );
}

const hTicks: [number, number][] = [
  [188, 270], [238, 270], [238, 288], [238, 483], [238, 494], [888, 270], [888, 281], [888, 483], [888, 494], [888, 586], [888, 597],
];
const vTicks: [number, number][] = [
  [287, 218], [305, 218], [806, 218], [816, 218], [287, 458],
];

function FloorPlan() {
  return (
    <svg
      viewBox="61 198 1075 399"
      width="1075"
      height="399"
      className="absolute top-0 left-0 font-[Liberation_Sans,sans-serif]"
      fill="none"
      role="img"
      aria-label="Planta Baixa"
    >
      <g stroke="#ff0000">
        <path d="M280 218.500H824M287.500 210v54M287.500 267v2M305.500 210v54M305.500 267v2M806.500 210v54M806.500 267v2M816.500 210v54M816.500 267v2" />
        <path d="M181 270.500h104M188.500 263v334M238.500 263v334M231 288.500h54M231 483.500h54M287 483.500h2M231 494.500h54M287 494.500h2M280 458.500h240M287.500 451v12" />
        <path d="M820 270.500h76M820 281.500h76M820 483.500h76M820 494.500h76M820 586.500h76M888.500 263v334" />
        <path d={hTicks.map(([x, y]) => `M${x - 4} ${y - 3}l9 8`).join("")} strokeWidth="2" />
        <path d={vTicks.map(([x, y]) => `M${x - 4} ${y + 5}l9 -9`).join("")} strokeWidth="2" />
        <path d="M604 526.500c26 2 44 20 49.500 47" strokeDasharray="9 4" stroke="#e03030" />
        <path d="M585.500 470v13" />
      </g>
      <Dim x={296} y={214}>0.25</Dim>
      <Dim x={408} y={214}>2.90</Dim>
      <Dim x={811} y={214}>0.15</Dim>
      <Dim x={399} y={453}>3.15</Dim>
      <Dim x={233} y={279} v>0.25</Dim>
      <Dim x={233} y={386} v>2.75</Dim>
      <Dim x={233} y={489} v>0.15</Dim>
      <Dim x={883} y={276} v>0.15</Dim>
      <Dim x={883} y={382} v>2.85</Dim>
      <Dim x={883} y={488} v>0.15</Dim>
      <Dim x={883} y={541} v>1.30</Dim>
      <Dim x={883} y={592} v>0.15</Dim>

      <g stroke="#0000ff">
        <path d="M287.500 270.500h18v18h-18zM347 483.500H287.500V582M347 494.500H297.500V582" />
        <path d="M490 483.500h21.500v-20M490 494.500h21.500V597M521.500 463v20.500h4.500v11h-4.500V597" />
        <path d="M589 483.500h217.500V453.500h10v69h-10v-28H603.500v28h-11v-28H589z" />
        <path d="M592.500 597v-17.500h11v7h203v-28h10V597" />
        <path d="M780 270.500h36.500v41h-10v-30H780" />
      </g>
      <g stroke="#00e4e4">
        <path d="M306 270.500h480M347 483.500h143M347 494.500h143M592.500 524v54M603.500 524v54" />
      </g>
      <g stroke="#f0f000">
        <path d="M287.500 289v194M297.500 289v194M347.500 487.500h36v3h-36M365.500 490.500h35v2h-35zM489.500 487.500h-35.500v3h35.500M436.500 490.500h36v2h-36z" />
        <path d="M526 494.500h2.500V470M531.500 470v13.500h-3M589 483.500h-3.500v11h3.500M592 526.500h12M603.500 573.500h50v3.500H592" />
        <path d="M810.500 312v141M812.500 312v141M810.500 523v35M812.500 523v35" />
      </g>
      <path d="M806.500 312v141M816.500 312v141M806.500 523v35M816.500 523v35" stroke="#80858c" />

      <g stroke="#7a9cf0" strokeWidth="3.500">
        <g transform="translate(170 195) scale(.3333)">
          <path d="M383 271h129v246H383zM388 276h119v236H388zM412 278l-17 32-2 60 19 30h91V278zM418 289l-14 36v36l14 28 44 6V283zM462 283h36v112h-36M470 288v104M478 288v104M484 288v104M491 288v104" />
          <path d="m429 405-22 12-12 16-4 25 6 28 16 17 16 8h32l16-10 14-18 5-25-5-22-12-19-18-12z" />
          <circle cx="408" cy="340" r="4" />
          <circle cx="444" cy="458" r="4" />
          <path d="M383 530h171v149H383zM415 530v149M421 535h130v139H421z" />
          <rect x="437" y="550" width="86" height="105" rx="10" />
          <rect x="446" y="560" width="69" height="87" rx="6" />
          <path d="M514 588h-8l-4 6v20l4 6h8" />
          <circle cx="400" cy="555" r="9" />
          <circle cx="400" cy="585" r="9" />
          <path d="m394 549 12 12M394 579l12 12M400 548v14M400 578v14" />
        </g>
        <g transform="translate(260 470) scale(.3333)">
          <path d="M113 74h120v306M113 80h110v300M133 217h79v96h-79zM140 225l62 78M204 225l-62 78" />
          <circle cx="172" cy="265" r="7" fill="#7a9cf0" />
        </g>
        <g transform="translate(580 470) scale(.3333)">
          <path d="M107 73h116v72l-14 18-43 12-43-12-16-18zM115 104l8-9h86l8 9v40l-15 15-36 9-36-9-15-15zM125 85h25M155 85h22M185 85h25M137 77v16M166 77v16M196 77v16" />
          <circle cx="137" cy="85" r="6" />
          <circle cx="166" cy="85" r="6" />
          <circle cx="196" cy="85" r="6" />
          <circle cx="165" cy="106" r="6" />
          <path d="M367 73v33h-8v9l-17 16-9 30 2 24 12 24 18 12h20l18-12 12-24 3-24-10-30-17-16v-9h-11V73M373 74v30" />
          <path d="m363 130-16 18-4 22 5 22 14 16 12 3 12-3 14-16 5-22-4-22-16-18zM363 130l4 8h14l4-8" />
          <path d="M463 73v278M552 74h23l-5 5h-13zM559 79v78M566 79v78" />
          <circle cx="563" cy="179" r="18" />
          <path d="M555 158h16l8 8 7 13-7 12-8 8h-16l-8-8-6-12 6-13z" />
        </g>
      </g>

      <g fill="#ff00ff" fontSize="12" fontFamily="DejaVu Sans, sans-serif">
        <text x="367" y="365">Área de Serviço</text>
        <text x="685" y="560">Banho</text>
        <text x="382" y="598" fontSize="13">Copa/Cozinha</text>
      </g>
      <text x="685" y="572" fontSize="12" fill="#ff00ff">3.71m2</text>
      <text x="367" y="376" fontSize="12" fill="#ffffff">9.45m2</text>

      <g stroke="#f4f4f4">
        <path d="M72.500 535v50.500H123M68.500 580.500h9v9h-9zM74 518l6.500 6v7M87 518l-6.500 6M127 571l13 13M140 571l-13 13" />
      </g>
    </svg>
  );
}

function NavArt() {
  return (
    <Ic b="0 0 96 636" c="h-[210px] w-[31px]">
      <g strokeWidth="3">
        <circle cx="78" cy="15" r="9" />
        <path d="m74 11 8 8M82 11l-8 8" />
        <path d="M49 58h31v32a32 32 0 1 1-31-32z" />
        <circle cx="48" cy="90" r="17" />
        <path d="M30 110l6-7M66 110l-6-7" />
        <path d="M41 148h16l-8 7z" fill="currentColor" />
        <path d="M4 169h88" opacity=".5" />
        <path d="M27 222 14 204c-3-6 4-8 8-4l9 9-6-20c-1-7 6-8 9-2l6 16-1-17c1-7 9-7 10 0l2 16 6-14c3-6 10-4 8 3l-4 20 7-8c5-4 9 0 7 4l-11 26c-6 14-28 16-37-11z" />
        <path d="m18 260 42 42M60 260l-42 42M18 272v-12h12M48 260h12v12M18 290v12h12" />
        <circle cx="60" cy="305" r="15" />
        <path d="m70 317 14 13" strokeWidth="6" />
        <path d="M41 350h16l-8 7zM41 464h16l-8 7z" fill="currentColor" />
        <path d="M46 374v60M38 386l8-14 8 14M38 424l8 12 8-12M60 402c22 2 22 14 0 18H24M30 412l-10 8 10 8M36 402c-18 3-18 10-6 15" />
        <path d="M4 483h88" opacity=".5" />
        <path d="M14 498h17v17H14zM38 498h17v17H38zM62 498h17v17H62zM14 526h48v38H14z" />
        <path d="m28 534 19 11-19 12z" fill="currentColor" />
        <circle cx="78" cy="608" r="10" />
        <path d="M72 606h12M72 610h12" />
      </g>
    </Ic>
  );
}

function Canvas() {
  return (
    <main className="relative min-w-0 flex-1 overflow-hidden bg-[#212830]">
      <FloorPlan />
      <p className="absolute top-[6px] left-[3px] whitespace-nowrap text-[#e4e6e8]">[−][Top][2D Wireframe]</p>

      <div className="absolute top-[7px] right-[7px] size-20 font-[Liberation_Sans,sans-serif] text-[12px] leading-3 font-bold text-[#c0c3c6]">
        <svg viewBox="0 0 80 80" className="absolute inset-0 size-20" aria-hidden="true">
          <circle cx="40" cy="39" r="30" fill="none" stroke="#474d56" strokeWidth="7" />
        </svg>
        <span className="absolute top-[2px] left-[36px]">N</span>
        <span className="absolute bottom-[2px] left-[36px]">S</span>
        <span className="absolute top-[34px] left-[3px]">W</span>
        <span className="absolute top-[34px] right-[5px]">E</span>
        <button
          type="button"
          className="absolute top-[24px] left-[25px] flex size-[30px] items-center justify-center border border-[#8f9499] bg-[#b7b9bb] text-[8px] text-[#3f464e]"
        >
          <span className="flex size-[18px] items-center justify-center bg-[#a3acb3] leading-none font-normal">TOP</span>
        </button>
      </div>
      <button
        type="button"
        className="absolute top-[95px] right-[25px] flex h-[17px] w-[47px] items-center justify-between rounded-sm border border-[#7f828e] bg-[#9a9ca8] px-1 font-[Liberation_Sans,sans-serif] text-[11px] text-[#4e525c]"
      >
        WCS
        <Ic b="0 0 8 6" c="h-[6px] w-2">
          <path d="M.500.500h7l-3.500 4z" stroke="#c0c2cc" />
        </Ic>
      </button>
      <div className="absolute top-[138px] right-[4px] rounded-md border border-[#2f353d] bg-[#5b6064] text-[#42474e]">
        <NavArt />
      </div>

      <div className="absolute top-[347px] left-[215px] flex h-[52px] w-[644px]">
        <div className="flex w-[25px] flex-col items-center gap-[9px] bg-[#2a313c]/90 pt-1 pr-1 text-[#b7babf]">
          <Ic b="0 0 17 5" c="h-[5px] w-[17px]">
            <path d="M0 1h17M0 4h17" stroke="#a9adb3" strokeWidth="2" strokeDasharray="2 1" />
          </Ic>
          <Ic c="size-[10px]">
            <path d="m1 1 14 14M15 1 1 15" strokeWidth="3" />
          </Ic>
          <Ic c="size-[14px]">
            <path d="M1 16 8 8C6 4 9 0 13 1l-2 3 2 2 3-1c0 4-3 6-6 5l-7 7z" fill="currentColor" stroke="none" />
          </Ic>
        </div>
        <div className="flex min-w-0 flex-1 flex-col gap-px font-[DejaVu_Sans_Mono,monospace] text-[12px] text-[#141414]">
          <p className="flex h-[30px] items-end bg-[#cdcbc8]/70 px-[2px] leading-[18px]">Command:</p>
          <label className="flex h-5 items-center bg-white/70 px-1">
            <Ic b="0 0 16 12" c="h-3 w-4">
              <path d="M.700.700h14.600v10.600H.700zM1 2h14M3 4l2.500 2.500L3 9M7 9h4" stroke="#555" strokeWidth="1.300" />
            </Ic>
            <span className="ml-[2px] text-[#555]">
              <Caret c="h-[4px] w-[7px]" />
            </span>
            <span className="sr-only">Command</span>
            <input defaultValue="_bbtca" className="ml-[2px] h-5 min-w-0 flex-1 bg-transparent leading-5" />
            <span className="rotate-180 text-[#444]">
              <Caret c="h-[4px] w-[7px]" />
            </span>
          </label>
        </div>
      </div>
    </main>
  );
}

/* ---------- status bar ---------- */

function St({ w, label, on, children }: { w: string; label: string; on?: boolean; children: ReactNode }) {
  return (
    <button
      type="button"
      aria-label={label}
      className={`${w} flex h-[22px] shrink-0 items-center justify-center ${on ? "bg-[#5b89bd] text-white" : "text-[#d9dbde]"}`}
    >
      {children}
    </button>
  );
}

function Group({ children }: { children: ReactNode }) {
  return <div className="flex h-6 items-center bg-[#3b4453]">{children}</div>;
}

const person = "M8 0 6.500 6 6 9 1 15l5.500-3L8 9l1.500 3 5.500 3-5-6-.500-3z";

function StatusBar() {
  return (
    <footer className="flex h-[29px] shrink-0 items-start bg-[#222933] pr-[2px]">
      <nav aria-label="Layouts" className="flex pl-[10px] text-[#b4b7bc]">
        <a href="#model" className="flex h-[18px] w-[61px] items-center justify-center bg-[#3b4453] font-bold text-white [clip-path:polygon(0_0,100%_0,92%_80%,88%_100%,12%_100%,8%_80%)]">
          Model
        </a>
        <a href="#layout1" className="ml-px flex h-[18px] w-[60px] items-center justify-center bg-[#303846] [clip-path:polygon(0_0,100%_0,92%_100%,8%_100%)]">
          Layout1
        </a>
        <a href="#layout2" className="ml-[5px] flex h-[18px] w-[60px] items-center justify-center bg-[#303846] [clip-path:polygon(0_0,100%_0,92%_100%,8%_100%)]">
          Layout2
        </a>
        <button type="button" aria-label="New layout" className="ml-[7px] flex h-[18px] w-[21px] items-center justify-center rounded-bl-lg rounded-br-xl bg-[#303846] text-[#c9ccd0]">
          <Ic c="size-[8px]" b="0 0 8 8">
            <path d="M4 0v8M0 4h8" strokeWidth="1.800" />
          </Ic>
        </button>
      </nav>
      <div className="ml-auto flex gap-[3px] pt-[2px]">
        <Group>
          <St w="w-[47px]" label="Model space">MODEL</St>
        </Group>
        <Group>
          <St w="w-[23px]" label="Grid">
            <Ic><path d="M3.500 0v16M8 0v16M12.500 0v16M0 3.500h16M0 8h16M0 12.500h16" /></Ic>
          </St>
          <St w="w-[26px]" label="Snap">
            <Ic><path d="M2 3h14M2 8h14M2 13h14" strokeWidth="2" strokeDasharray="2 3" /></Ic>
          </St>
          <St w="w-[14px]" label="Snap options"><Caret c="h-[4px] w-[7px]" /></St>
        </Group>
        <div className="flex gap-[2px]">
          <Group>
            <St w="w-[22px]" label="Ortho" on>
              <Ic><path d="M1.500 0v14.500H16M1.500 9.500h5v5" strokeWidth="1.200" /></Ic>
            </St>
            <St w="w-[26px]" label="Polar">
              <Ic><path d="M13.500 9a6.500 6.500 0 1 1-2.500-5M7 8.500h9M7 8.500l6-7M11 5c2 1 2 5 0 7" strokeWidth="1.200" /></Ic>
            </St>
            <St w="w-[14px]" label="Polar options"><Caret c="h-[4px] w-[7px]" /></St>
            <St w="w-[26px]" label="Isodraft">
              <Ic><path d="m1 1 13 13" stroke="#c86464" strokeWidth="1.300" /><path d="M8 1v14" stroke="#50b464" /><circle cx="8" cy="8" r="1.500" /></Ic>
            </St>
            <St w="w-[14px]" label="Isodraft options"><Caret c="h-[4px] w-[7px]" /></St>
          </Group>
          <Group>
            <St w="w-[22px]" label="Object snap tracking" on>
              <Ic><path d="M0 14.500h16M1 14 13 2" strokeWidth="1.200" /><circle cx="7" cy="8" r="1.500" fill="currentColor" /></Ic>
            </St>
            <span className="w-[2px]" />
            <St w="w-[22px]" label="Object snap" on>
              <Ic><path d="M3.500 6v9h12V3.500H6M.500.500h4v4h-4z" strokeWidth="1.200" /></Ic>
            </St>
            <St w="w-[16px]" label="Object snap options"><Caret c="h-[4px] w-[7px]" /></St>
          </Group>
        </div>
        <Group>
          <St w="w-[23px]" label="Annotation visibility" on>
            <Ic><path d={person} fill="currentColor" strokeWidth=".8" /><circle cx="13.500" cy="3" r="2.200" /></Ic>
          </St>
          <St w="w-[25px]" label="Auto scale">
            <Ic><path d={person} fill="currentColor" strokeWidth=".8" /><path d="m14 0-3 4h4l-3 4" /></Ic>
          </St>
          <St w="w-[22px]" label="Annotation scale">
            <Ic><path d={person} fill="currentColor" strokeWidth=".8" /></Ic>
          </St>
          <button type="button" className="flex w-[35px] items-center justify-center gap-1 text-white">
            1:1
            <Caret c="h-[4px] w-[7px]" />
          </button>
        </Group>
        <div className="flex gap-px">
          <Group>
            <St w="w-[23px]" label="Workspace">
              <Ic>
                <circle cx="8" cy="8" r="4" strokeWidth="3" />
                <circle cx="8" cy="8" r="6.500" strokeWidth="2.500" strokeDasharray="2.550 2.550" />
              </Ic>
            </St>
            <St w="w-[16px]" label="Workspace options"><Caret c="h-[4px] w-[7px]" /></St>
          </Group>
          <Group>
            <St w="w-[24px]" label="Annotation monitor">
              <Ic><path d="M8 0v16M0 8h16" strokeWidth="1.800" /></Ic>
            </St>
          </Group>
        </div>
        <Group>
          <St w="w-[24px]" label="Isolate objects">
            <Ic><path d="M.500.500h6v6h-6zM7 10.500l-3 5h6z" /><circle cx="12.500" cy="7" r="3" /></Ic>
          </St>
        </Group>
        <Group>
          <St w="w-[22px]" label="Hardware acceleration">
            <Ic>
              <path d="M3 1h9l2 2v9H3z" fill="#3f7fbf" stroke="none" />
              <path d="M4 0v9M0 4h10" stroke="#dfe6ee" />
              <path d="M1 10h6v4H1z" fill="#e8b83c" stroke="none" />
              <path d="m7 11 3 3 6-6" stroke="#5fbf4a" strokeWidth="2.500" />
            </Ic>
          </St>
          <St w="w-[27px]" label="Performance">
            <Ic>
              <path d="M0 1h14v11H0z" fill="#f4f4f4" stroke="none" />
              <path d="M1 8 5 3l4 5 4-4" stroke="#3b6ea5" />
              <path d="m11.500 6 4.500 9H7z" fill="#e8792b" stroke="none" />
              <path d="M11.500 9v3M11.500 13v1" stroke="#fff" />
            </Ic>
          </St>
        </Group>
        <Group>
          <St w="w-[24px]" label="Clean screen">
            <Ic><path d="M.700 2.700h14.600v10.600H.700zM9 5h4v3M13 5 9.500 8M7 11H3V8M3 11l3.500-3" strokeWidth="1.200" /></Ic>
          </St>
          <St w="w-[24px]" label="Customization">
            <Ic><path d="M0 2.500h16M0 8.500h16M0 14.500h16" strokeWidth="1.800" /></Ic>
          </St>
        </Group>
      </div>
    </footer>
  );
}

/* ---------- block library dialog ---------- */

const blocks = [
  "Lavatório Simples",
  "Lavatório Simples",
  "Lavatório de Coluna",
  "Lavatório de Coluna",
  "Lavatório - 1 Cuba",
  "Lavatório - 2 Cubas",
  "Mictório",
  "Vaso",
  "Vaso com Caixa",
];

function LibraryDialog() {
  return (
    <div
      role="dialog"
      aria-labelledby="library-title"
      className="absolute top-[144px] left-[410px] w-[379px] bg-[#f0f0f0] font-[Roboto,sans-serif] text-[11px] text-black shadow-[0_0_0_1px_#3a3f46,0_3px_10px_rgba(0,0,0,0.5)]"
    >
      <div className="flex h-[30px] items-center justify-between bg-white pr-[9px] pl-2">
        <h2 id="library-title" className="font-[Open_Sans,sans-serif] text-[12px]">
          Biblioteca AditivoCAD 1LT - Banho
        </h2>
        <button type="button" aria-label="Close" className="p-px">
          <Ic b="0 0 11 11" c="size-[11px]">
            <path d="m.500.500 10 10M10.500.500l-10 10" strokeWidth="1.200" />
          </Ic>
        </button>
      </div>
      <div className="pr-[6px] pb-[7px] pl-2">
        <div className="flex h-[27px] items-start justify-between pt-[6px] pr-[5px]">
          <label htmlFor="category" className="whitespace-nowrap">
            Alterna para Categoria:
          </label>
          <div className="relative w-[245px] shrink-0">
            <select id="category" defaultValue="Banho" className="h-[21px] w-full appearance-none border border-[#a8a8a8] bg-[#e1e1e1] px-[3px]">
              <option>Banho</option>
            </select>
            <span className="pointer-events-none absolute top-[8px] right-[4px] text-[#444]">
              <Ic b="0 0 10 6" c="h-[6px] w-[10px]">
                <path d="m1 1 4 4 4-4" />
              </Ic>
            </span>
          </div>
        </div>
        <div className="flex gap-2">
          <div className="w-[180px] shrink-0">
            <p id="blocks-label" className="mt-[3px] mb-[4px] leading-[15px]">
              Blocos de banho
            </p>
            <div className="flex h-[119px] border border-[#777b80] bg-white">
              <ul role="listbox" aria-labelledby="blocks-label" className="flex-1">
                {blocks.map((b, i) => (
                  <li
                    key={i}
                    role="option"
                    aria-selected={i === blocks.length - 1}
                    className={`h-[13px] px-[2px] leading-[14px] ${i === blocks.length - 1 ? "bg-[#0078d7] text-white" : ""}`}
                  >
                    {b}
                  </li>
                ))}
              </ul>
              <div className="flex w-[17px] flex-col items-center bg-[#f0f0f0] text-[#555]">
                <button type="button" aria-label="Scroll up" className="flex h-[18px] items-center">
                  <Ic b="0 0 10 6" c="h-[5px] w-[8px]"><path d="m1 5 4-4 4 4" strokeWidth="2.200" /></Ic>
                </button>
                <span className="mt-auto h-[44px] w-[15px] bg-[#cdcdcd]" />
                <button type="button" aria-label="Scroll down" className="flex h-[17px] items-center">
                  <Ic b="0 0 10 6" c="h-[5px] w-[8px]"><path d="m1 1 4 4 4-4" strokeWidth="2.200" /></Ic>
                </button>
              </div>
            </div>
          </div>
          <div className="mt-5 h-[104px] flex-1 border border-[#8a8d91] bg-[#212830]">
            <svg viewBox="0 0 525 306" className="h-full w-full" fill="none" stroke="#fff" strokeWidth="3" role="img" aria-label="Vaso com Caixa">
              <path d="M302 17h43v133l-4 5h-39zM302 23h43M302 147h43M157 161h114l10-5h50l-4 11-16 16-14 5 9 20-8 14-5 14v50H192v-68l-12-17-14-12-6-9v-19z" />
              <circle cx="313" cy="32" r="4" />
              <path d="m338 280 12 12M350 280l-12 12" stroke="#00e000" />
            </svg>
          </div>
        </div>
        <fieldset className="mt-[6px] flex justify-between border border-[#dcdcdc] pr-[9px] pb-[1px] pl-2">
          <legend className="px-[1px] leading-[14px]">Parametros de inserção</legend>
          <div className="pt-[5px]">
            {["Vista Planta", "Vista Lateral", "Vista Frontal"].map((v) => (
              <label key={v} className="flex h-[25px] items-center gap-[3px]">
                <input
                  type="radio"
                  name="view"
                  defaultChecked={v === "Vista Lateral"}
                  className="size-[13px] appearance-none rounded-full border border-[#333] bg-white checked:bg-[#222] checked:shadow-[inset_0_0_0_2px_white]"
                />
                {v}
              </label>
            ))}
          </div>
          <div className="w-[143px] pt-[6px]">
            {["X", "Y"].map((a) => (
              <label key={a} className="flex h-[27px] items-center justify-between">
                Escala em {a} :
                <input defaultValue="1.00" className="h-[19px] w-[48px] border border-[#666] bg-white px-[2px] pb-[2px]" />
              </label>
            ))}
            <label className="flex h-[17px] items-center gap-[3px]">
              <input type="checkbox" className="size-[13px] appearance-none border border-[#333] bg-white" />
              Explodir o bloco
            </label>
          </div>
        </fieldset>
        <div className="mt-[7px] flex gap-[10px] pr-[2px] pl-px">
          <button type="button" className="h-5 w-[171px] border border-[#adadad] bg-[#e1e1e1]">
            Sair
          </button>
          <button type="button" className="h-5 flex-1 border-2 border-[#0078d7] bg-[#e1e1e1]">
            Inserir
          </button>
        </div>
      </div>
    </div>
  );
}

export default function App() {
  return (
    <div className="relative flex min-h-screen flex-col overflow-hidden bg-[#3b4453] font-[Open_Sans,sans-serif] text-[12px] leading-4">
      <TitleBar />
      <div className="mx-1 mt-px flex flex-1 flex-col">
        <Ribbon />
        <div className="mt-1 -mr-1 flex flex-1 items-stretch">
          <div className="flex items-start gap-[3px] pr-1">
            <Toolbar name="Dimensions" tools={dimTools} />
            <div className="flex flex-col gap-[2px]">
              <Toolbar name="Doors and windows" tools={doorTools} />
              <Toolbar name="Wall editing" tools={wallEditTools} />
            </div>
          </div>
          <Canvas />
          <div className="flex items-start gap-[3px] pr-[7px] pl-1">
            <div className="flex flex-col gap-[2px]">
              <Toolbar name="Electrical" tools={elecTools} />
              <Toolbar name="Walls" tools={wallTools} />
            </div>
            <Toolbar name="Outlets" tools={outletTools} />
          </div>
        </div>
        <StatusBar />
      </div>
      <div className="h-1 shrink-0 border-b border-[#222933]" />
      <LibraryDialog />
    </div>
  );
}
